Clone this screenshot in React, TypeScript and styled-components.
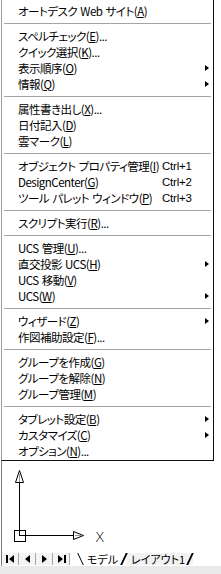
import React from 'react';
import styled, { createGlobalStyle } from 'styled-components';

const Global = createGlobalStyle`
  html, body { margin: 0; padding: 0; background: #ffffff; }
  body {
    font-family: "Noto Sans CJK JP", "Noto Sans", sans-serif;
    font-size: 12px;
    color: #000;
  }
  #root { width: 221px; height: 574px; }
`;

const Screen = styled.div`
  position: relative;
  width: 221px;
  height: 574px;
  display: flex;
  flex-direction: column;
  overflow: hidden;
  background: #fff;
`;

const Canvas = styled.div`
  flex: 1;
  margin-left: 1px;
  border-left: 1px solid #7c7c7c;
  display: flex;
  flex-direction: column;
  justify-content: flex-end;
  padding-bottom: 7px;
`;

const TabBar = styled.div`
  height: 12px;
  display: flex;
  align-items: stretch;
  margin-left: 1px;
  border-left: 1px solid #7c7c7c;
  padding-bottom: 1px;
`;

const NavButton = styled.div`
  width: 16px;
  display: flex;
  align-items: center;
  justify-content: center;
  border-right: 1px solid #a8a8a8;
  background: #f4f4f4;
`;

const Tabs = styled.div`
  display: flex;
  margin-left: 8px;
  font-size: 11px;
  line-height: 12px;
`;

const Tab = styled.div<{ $active?: boolean }>`
  position: relative;
  padding: 0 ${(p) => (p.$active ? '9px' : '8px')} 0 ${(p) => (p.$active ? '9px' : '4px')};
  background: ${(p) => (p.$active ? '#fff' : '#f2f2f2')};
  z-index: ${(p) => (p.$active ? 2 : 1)};
  font-feature-settings: "palt";
  white-space: nowrap;
  &::before {
    content: '';
    position: absolute;
    left: 2px;
    top: 0;
    width: 1px;
    height: 12px;
    background: #000;
    transform: skewX(25deg);
    display: ${(p) => (p.$active ? 'block' : 'none')};
  }
  &::after {
    content: '';
    position: absolute;
    right: 2px;
    top: 0;
    width: 2px;
    height: 12px;
    background: #000;
    transform: skewX(-25deg);
  }
`;

const StatusStrip = styled.div`
  height: 8px;
  background: #e9e9e9;
`;

const Menu = styled.div`
  position: absolute;
  left: 1px;
  top: 0;
  width: 211px;
  background: #fff;
  border-left: 1px solid #9c9c9c;
  border-right: 1px solid #111;
  border-bottom: 1px solid #111;
  padding: 3px 0 1px;
  font-feature-settings: "palt";
`;

const Item = styled.div`
  height: 16px;
  display: flex;
  align-items: center;
  padding: 0 4px 0 16px;
  white-space: nowrap;
  line-height: 16px;
`;

const Label = styled.span`
  flex: 0 0 144px;
  font-size: 11.5px;
  letter-spacing: -0.5px;
  word-spacing: 1px;
`;

const Shortcut = styled.span`
  flex: 1;
  font-family: "Liberation Sans", "Noto Sans", sans-serif;
  font-size: 11.5px;
  letter-spacing: -0.2px;
`;

const Arrow = styled.span`
  margin-left: auto;
  width: 0;
  height: 0;
  border-top: 3.5px solid transparent;
  border-bottom: 3.5px solid transparent;
  border-left: 4px solid #000;
`;

const Separator = styled.div`
  height: 9px;
  display: flex;
  align-items: center;
  padding: 0 2px;
  &::after {
    content: '';
    flex: 1;
    height: 1px;
    background: #a4a4a4;
  }
`;

type Entry =
  | { sep: true }
  | { label: string; key: string; dots?: boolean; sub?: boolean; shortcut?: string };

const entries: Entry[] = [
  { label: 'オートデスク Web サイト', key: 'A' },
  { sep: true },
  { label: 'スペルチェック', key: 'E', dots: true },
  { label: 'クイック選択', key: 'K', dots: true },
  { label: '表示順序', key: 'O', sub: true },
  { label: '情報', key: 'Q', sub: true },
  { sep: true },
  { label: '属性書き出し', key: 'X', dots: true },
  { label: '日付記入', key: 'D' },
  { label: '雲マーク', key: 'L' },
  { sep: true },
  { label: 'オブジェクト プロパティ管理', key: 'I', shortcut: 'Ctrl+1' },
  { label: 'DesignCenter', key: 'G', shortcut: 'Ctrl+2' },
  { label: 'ツール パレット ウィンドウ', key: 'P', shortcut: 'Ctrl+3' },
  { sep: true },
  { label: 'スクリプト実行', key: 'R', dots: true },
  { sep: true },
  { label: 'UCS 管理', key: 'U', dots: true },
  { label: '直交投影 UCS', key: 'H', sub: true },
  { label: 'UCS 移動', key: 'V' },
  { label: 'UCS', key: 'W', sub: true },
  { sep: true },
  { label: 'ウィザード', key: 'Z', sub: true },
  { label: '作図補助設定', key: 'F', dots: true },
  { sep: true },
  { label: 'グループを作成', key: 'G' },
  { label: 'グループを解除', key: 'N' },
  { label: 'グループ管理', key: 'M' },
  { sep: true },
  { label: 'タブレット設定', key: 'B', sub: true },
  { label: 'カスタマイズ', key: 'C', sub: true },
  { label: 'オプション', key: 'N', dots: true },
];

const UcsIcon = () => (
  <svg width="110" height="80" viewBox="0 0 110 80" style={{ display: 'block', marginLeft: 1 }}>
    <g fill="none" stroke="#000" strokeWidth="1" shapeRendering="crispEdges">
      <line x1="16.5" y1="16" x2="16.5" y2="69" />
      <line x1="16" y1="69.5" x2="70" y2="69.5" />
      <rect x="11.5" y="64.5" width="11" height="11" />
    </g>
    <polygon points="16.5,4.5 12.5,16.5 20.5,16.5" fill="#fff" stroke="#000" strokeWidth="1" />
    <line x1="16.5" y1="8" x2="16.5" y2="16" stroke="#999" />
    <polygon points="80.5,69.5 70.5,65.5 70.5,73.5" fill="#fff" stroke="#000" strokeWidth="1" />
    <line x1="72" y1="69.5" x2="78" y2="69.5" stroke="#999" />
    <text x="92" y="76" fontFamily="DejaVu Sans, sans-serif" fontSize="14" fill="#000" fontWeight="200">X</text>
  </svg>
);

const NavIcon = ({ dir, bar }: { dir: 'l' | 'r'; bar?: boolean }) => (
  <svg width="9" height="8" viewBox="0 0 9 8">
    {dir === 'l' ? (
      <>
        {bar && <rect x="0" y="0" width="2" height="8" fill="#000" />}
        <polygon points={bar ? '3,4 8,0 8,8' : '2,4 7,0 7,8'} fill="#000" />
      </>
    ) : (
      <>
        <polygon points={bar ? '1,0 6,4 1,8' : '2,0 7,4 2,8'} fill="#000" />
        {bar && <rect x="7" y="0" width="2" height="8" fill="#000" />}
      </>
    )}
  </svg>
);

export default function App() {
  return (
    <Screen>
      <Global />
      <Canvas>
        <UcsIcon />
      </Canvas>
      <TabBar>
        <NavButton><NavIcon dir="l" bar /></NavButton>
        <NavButton><NavIcon dir="l" /></NavButton>
        <NavButton><NavIcon dir="r" /></NavButton>
        <NavButton><NavIcon dir="r" bar /></NavButton>
        <Tabs>
          <Tab $active>モデル</Tab>
          <Tab>レイアウト1</Tab>
        </Tabs>
      </TabBar>
      <StatusStrip />
      <Menu>
        {entries.map((e, i) =>
          'sep' in e ? (
            <Separator key={i} />
          ) : (
            <Item key={i}>
              <Label>
                {e.label}(<u>{e.key}</u>){e.dots ? '...' : ''}
              </Label>
              {e.shortcut && <Shortcut>{e.shortcut}</Shortcut>}
              {e.sub && <Arrow />}
            </Item>
          )
        )}
      </Menu>
    </Screen>
  );
}
